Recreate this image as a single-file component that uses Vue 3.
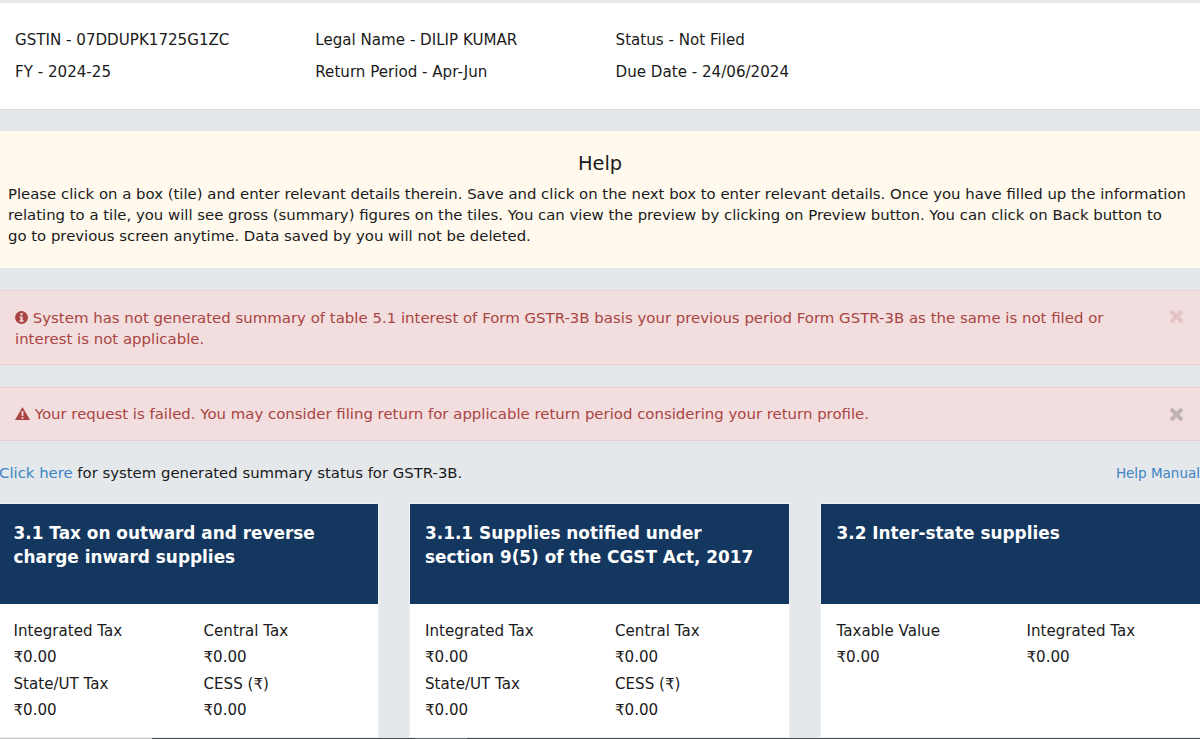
<script setup>
const top = [
  ['GSTIN - 07DDUPK1725G1ZC', 'FY - 2024-25'],
  ['Legal Name - DILIP KUMAR', 'Return Period - Apr-Jun'],
  ['Status - Not Filed', 'Due Date - 24/06/2024'],
]
const cards = [
  {
    title: '3.1 Tax on outward and reverse charge inward supplies',
    items: [['Integrated Tax', '₹0.00'], ['Central Tax', '₹0.00'], ['State/UT Tax', '₹0.00'], ['CESS (₹)', '₹0.00']],
  },
  {
    title: '3.1.1 Supplies notified under section 9(5) of the CGST Act, 2017',
    items: [['Integrated Tax', '₹0.00'], ['Central Tax', '₹0.00'], ['State/UT Tax', '₹0.00'], ['CESS (₹)', '₹0.00']],
  },
  {
    title: '3.2 Inter-state supplies',
    items: [['Taxable Value', '₹0.00'], ['Integrated Tax', '₹0.00']],
  },
]
</script>

<template>
  <div class="page">
    <section class="info">
      <div v-for="(col, i) in top" :key="i" class="info-col">
        <p v-for="t in col" :key="t">{{ t }}</p>
      </div>
    </section>

    <section class="help">
      <h4>Help</h4>
      <p>Please click on a box (tile) and enter relevant details therein. Save and click on the next box to enter relevant details. Once you have filled up the information relating to a tile, you will see gross (summary) figures on the tiles. You can view the preview by clicking on Preview button. You can click on Back button to<br>go to previous screen anytime. Data saved by you will not be deleted.</p>
    </section>

    <section class="alert alert-first">
      <p>
        <svg class="ic" width="13" height="13" viewBox="0 0 12 12"><circle cx="6" cy="6" r="6" fill="#a94442"/><rect x="5" y="2" width="2" height="2" fill="#f2dede"/><path d="M4.2 5h2.8v3.6h.9V10H4.2V8.6h.9V6.3h-.9z" fill="#f2dede"/></svg>
        System has not generated summary of table 5.1 interest of Form GSTR-3B basis your previous period Form GSTR-3B as the same is not filed or interest is not applicable.
      </p>
      <span class="close light">
        <svg width="15" height="15" viewBox="0 0 15 15"><path d="M2 2l11 11M13 2L2 13" stroke="currentColor" stroke-width="4"/></svg>
      </span>
    </section>

    <section class="alert alert-second">
      <p>
        <svg class="ic" width="15" height="13" viewBox="0 0 15 13"><path d="M7.5 0L15 13H0z" fill="#a94442"/><rect x="6.6" y="4" width="1.8" height="5" fill="#f2dede"/><rect x="6.6" y="10" width="1.8" height="1.8" fill="#f2dede"/></svg>
        Your request is failed. You may consider filing return for applicable return period considering your return profile.
      </p>
      <span class="close">
        <svg width="15" height="15" viewBox="0 0 15 15"><path d="M2 2l11 11M13 2L2 13" stroke="currentColor" stroke-width="4"/></svg>
      </span>
    </section>

    <section class="links">
      <p><a>Click here</a> for system generated summary status for GSTR-3B.</p>
      <a class="manual">Help Manual</a>
    </section>

    <section class="cards">
      <article v-for="c in cards" :key="c.title" class="card">
        <h3>{{ c.title }}</h3>
        <div class="grid">
          <template v-for="row in [0, 2]" :key="row">
            <template v-if="c.items[row]">
              <span>{{ c.items[row][0] }}</span>
              <span>{{ c.items[row + 1][0] }}</span>
              <span>{{ c.items[row][1] }}</span>
              <span>{{ c.items[row + 1][1] }}</span>
            </template>
          </template>
        </div>
      </article>
    </section>
    <div class="footer-line"></div>
  </div>
</template>

<style>
html, body { margin: 0; background: #e4e8eb; }
</style>

<style scoped>
.page {
  height: 739px;
  overflow: hidden;
  position: relative;
  background: #e4e8eb;
  font-family: "DejaVu Sans", Verdana, sans-serif;
  font-size: 15.1px;
  color: #1a1a1a;
  padding-top: 3px;
  box-sizing: border-box;
}
p { margin: 0; }
.info {
  background: #fff;
  border-bottom: 1px solid #d9dcde;
  display: flex;
  padding: 27px 15px 0;
  height: 79px;
}
.info-col { width: 300.3px; display: flex; flex-direction: column; gap: 11px; line-height: 21px; }
.help {
  margin-top: 21px;
  height: 137px;
  background: #fff9ee;
  text-align: center;
  padding: 0 8px;
  overflow: hidden;
}
.help h4 { margin: 21px 0 8px; font-size: 19.4px; font-weight: 400; line-height: 24px; }
.help p { text-align: left; line-height: 21px; font-size: 14.88px; }
.alert {
  background: #f2dede;
  border: 1px solid #ebccd1;
  border-left: 0;
  border-right: 0;
  color: #a94442;
  display: flex;
  gap: 60px;
  padding: 0 16px 0 15px;
  box-sizing: border-box;
  font-size: 14.95px;
}
.alert p { flex: 1; line-height: 21px; }
.alert-first { margin-top: 22px; height: 75px; padding-top: 17px; }
.alert-second { margin-top: 22px; height: 54px; padding-top: 16px; font-size: 14.93px; }
.ic { vertical-align: -1px; }
.close { flex: none; display: flex; color: #bfb3b3; }
.alert-first .close { padding-top: 1px; }
.alert-second .close { padding-top: 3px; }
.close.light { color: #e6c4c4; }
.links {
  display: flex;
  justify-content: space-between;
  height: 63px;
  align-items: flex-start;
  padding-top: 23px;
  margin-left: -1px;
  box-sizing: border-box;
  font-size: 14.87px;
}
.links a { color: #3c84c4; }
.manual { font-size: 13.5px; line-height: 18px; }
.cards { display: flex; gap: 32px; margin-left: -2px; }
.card { width: 379.5px; flex: none; background: #fff; height: 233px; box-shadow: 0 0 0 1px #eef1f3; }
.card h3 {
  margin: 0;
  background: #14375f;
  color: #fff;
  height: 100px;
  box-sizing: border-box;
  padding: 17px 15.5px 0;
  font-size: 16.9px;
  font-weight: 700;
  line-height: 24px;
}
.grid { display: grid; grid-template-columns: 190px 1fr; padding: 17px 15.5px 0; row-gap: 6.3px; line-height: 20px; }
.footer-line { position: absolute; left: 152px; right: 0; bottom: 0; height: 1px; background: #454b4d; }
.footer-line::before { content: ""; position: absolute; left: -152px; width: 152px; height: 1px; background: #c4c4c4; }
.footer-line::after { content: ""; position: absolute; left: 263px; width: 52px; height: 1px; background: #6d7678; }
</style>
